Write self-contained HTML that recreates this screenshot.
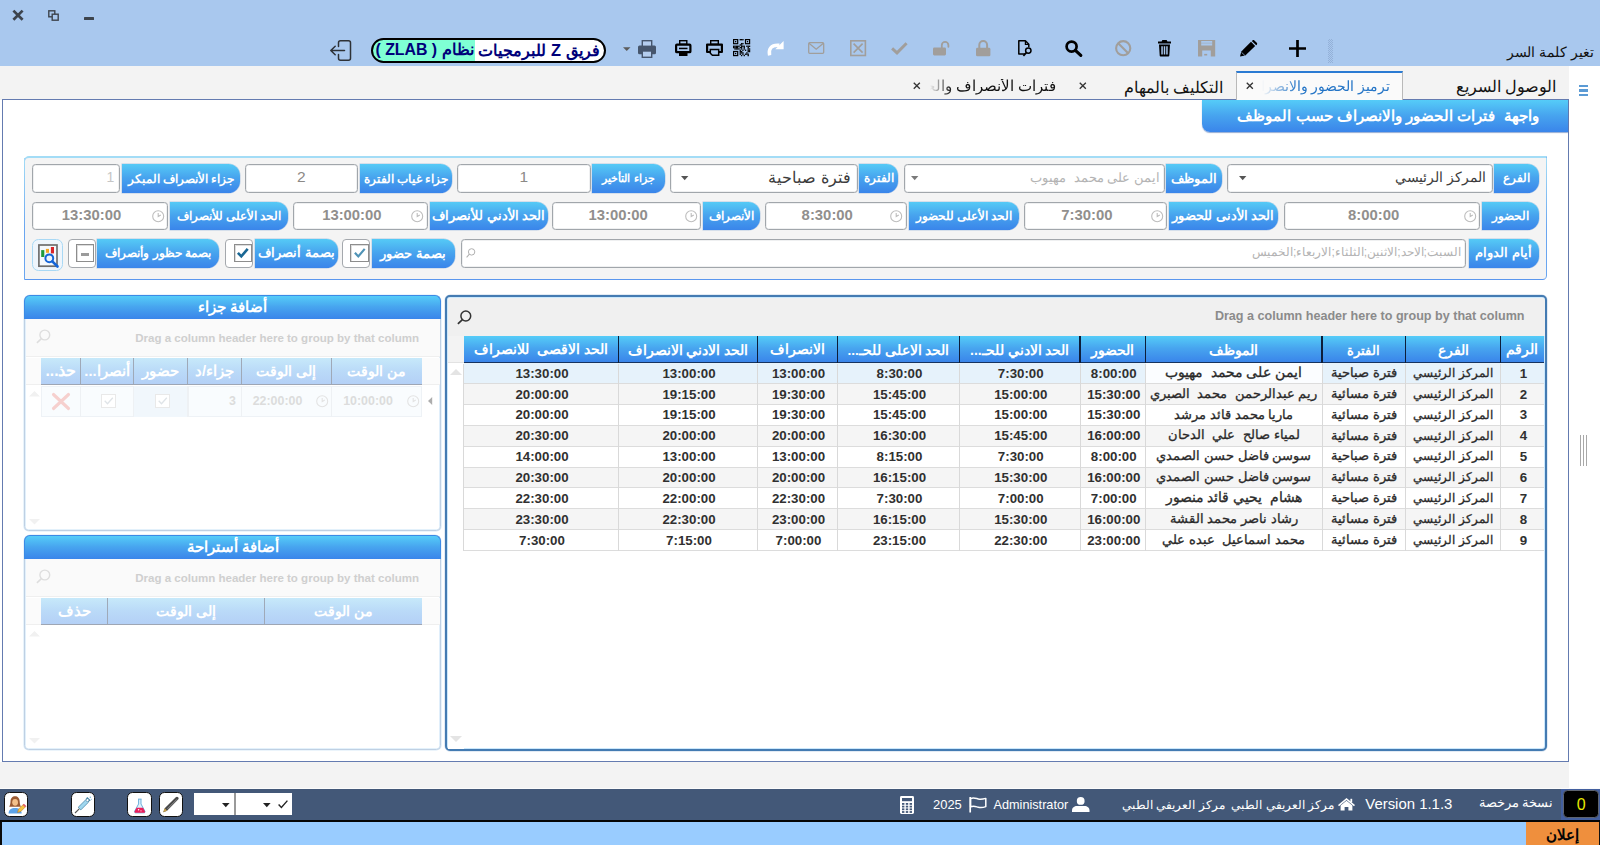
<!DOCTYPE html><html lang="ar"><head><meta charset="utf-8"><title>ZLAB</title><style>
*{box-sizing:border-box;margin:0;padding:0}
html,body{width:1600px;height:845px;overflow:hidden;background:#fff}
body{font-family:"Liberation Sans",sans-serif;position:relative;color:#222}
.a{position:absolute}
.t{position:absolute;white-space:nowrap;line-height:1}
.rtl{direction:rtl}
svg{position:absolute;overflow:visible}
#topbar{left:0;top:0;width:1600px;height:66px;background:#a9c8ee}
#tabstrip{left:0;top:66px;width:1569px;height:34px;background:#f3f3f3}
#panel{left:2px;top:98.700px;width:1567px;height:663.300px;background:#fff;border:1.900px solid #647bb0}
#gapbar{left:0;top:762px;width:1569px;height:27px;background:#f3f3f3}
#status{left:0;top:788.600px;width:1600px;height:32px;background:#435878;box-shadow:0 -1px 0 #fbfbfb}
#blackline{left:0;top:819.700px;width:1600px;height:2.300px;background:#050505}
#adbar{left:2px;top:822px;width:1597px;height:23px;background:#99ccff}
.lbl{position:absolute;height:28.500px;border-radius:0 11.500px 11.500px 0;background:linear-gradient(#55caf6,#47a3ee 48%,#3a85ea);color:#fff;font-weight:bold;text-align:center;line-height:29.500px;white-space:nowrap;direction:rtl;overflow:hidden;box-shadow:0 0 0 .5px rgba(120,160,210,.5)}
.inp{position:absolute;height:28.600px;background:#fff;border:1.800px solid #a1a6ab;border-radius:3.500px;box-shadow:inset 0 0 0 .5px #dfe1e3}
.inp .v{position:absolute;left:0;right:0;top:0;bottom:0;text-align:center;line-height:24.200px;color:#918f8d;white-space:nowrap}
.hdr{background:linear-gradient(#55ccf8,#47a4ef 48%,#3a85ea)}
</style></head><body>
<div class="a" id="topbar"></div>
<svg style="left:12px;top:9px" width="12" height="12" viewBox="0 0 12 12" ><path d="M1.400 1.600 L10.600 10.800 M10.600 1.600 L1.400 10.800" stroke="#3d444d" stroke-width="2.700" fill="none"/></svg>
<svg style="left:48px;top:10px" width="11" height="11" viewBox="0 0 11 11" ><rect x=".800" y=".800" width="6" height="6" fill="none" stroke="#3d444d" stroke-width="1.400"/><rect x="4.200" y="4.200" width="6" height="6" fill="#a9c8ee" stroke="#3d444d" stroke-width="1.400"/></svg>
<div class="a" style="left:84px;top:16.500px;width:9.500px;height:3.400px;background:#3d444d;border-radius:.5px"></div>
<svg style="left:329px;top:39px" width="23" height="23" viewBox="0 0 23 23" fill="none" stroke="#2e3237" stroke-width="1.500" stroke-linecap="round" stroke-linejoin="round"><path d="M9.500 7.500V3.800a2 2 0 0 1 2-2h8a2 2 0 0 1 2 2v15.400a2 2 0 0 1-2 2h-8a2 2 0 0 1-2-2V15.500"/><path d="M15.500 11.500H2.200M6.200 7.200L1.800 11.500l4.400 4.300"/></svg>
<div class="a" style="left:371px;top:38px;width:235px;height:25px;border:2px solid #000;border-radius:13px;background:linear-gradient(90deg,#7fffd4 0,#7fffd4 102.500px,#fff 102.500px,#fff 100%)"></div>
<div class="t rtl" style="left:477px;top:41.8px;width:124px;text-align:center;font-size:16.37px;font-weight:bold;color:#00007a;">فريق Z للبرمجيات</div>
<div class="t rtl" style="left:375px;top:41.8px;width:99px;text-align:center;font-size:15.88px;font-weight:bold;color:#00007a;">نظام ( ZLAB )</div>
<svg style="left:622.5px;top:46.5px" width="7.5" height="4" viewBox="0 0 8 4" ><path d="M0 0h8L4 4z" fill="#5c5c5c"/></svg>
<svg style="left:637.8px;top:39.5px" width="18" height="18" viewBox="0 0 18 18" ><rect x="0" y="5.600" width="18" height="8.600" rx="1.500" fill="#46566d"/>
<rect x="4.300" y=".700" width="9.400" height="5.600" fill="#b4cdee" stroke="#46566d" stroke-width="1.400"/>
<rect x="4.300" y="11" width="9.400" height="6.300" fill="#b4cdee" stroke="#46566d" stroke-width="1.400"/></svg>
<svg style="left:674.5px;top:40px" width="16.5" height="16" viewBox="0 0 16.500 16" ><rect x="4.700" y=".700" width="7.100" height="3.600" fill="#a9c8ee" stroke="#000" stroke-width="1.400"/>
<rect x="1.100" y="4.600" width="14.300" height="7.600" rx=".800" fill="#a9c8ee" stroke="#000" stroke-width="2.200"/>
<rect x="4" y="7.700" width="8.500" height="1.500" fill="#000"/>
<rect x="4" y="12.500" width="8.500" height="3.500" fill="#000"/></svg>
<svg style="left:706px;top:40px" width="17" height="16" viewBox="0 0 17 16" ><rect x="4.700" y=".700" width="7.600" height="3.600" fill="none" stroke="#000" stroke-width="1.400"/>
<path d="M4.300 12H1.100V4.600h14.800V12h-3.200" fill="none" stroke="#000" stroke-width="2.200" stroke-linejoin="round"/>
<path d="M4.300 9.400h8.400v5.800H6.400L4.300 13.200z" fill="none" stroke="#000" stroke-width="1.500"/></svg>
<svg style="left:733.4px;top:39.4px" width="17.2" height="17.2" viewBox="0 0 17.200 17.200" ><rect x="0.00" y="6.62" width="1.35" height="1.35" fill="#000"/><rect x="0.00" y="7.94" width="1.35" height="1.35" fill="#000"/><rect x="1.32" y="6.62" width="1.35" height="1.35" fill="#000"/><rect x="1.32" y="7.94" width="1.35" height="1.35" fill="#000"/><rect x="1.32" y="9.26" width="1.35" height="1.35" fill="#000"/><rect x="2.65" y="6.62" width="1.35" height="1.35" fill="#000"/><rect x="2.65" y="7.94" width="1.35" height="1.35" fill="#000"/><rect x="2.65" y="9.26" width="1.35" height="1.35" fill="#000"/><rect x="3.97" y="6.62" width="1.35" height="1.35" fill="#000"/><rect x="3.97" y="7.94" width="1.35" height="1.35" fill="#000"/><rect x="3.97" y="9.26" width="1.35" height="1.35" fill="#000"/><rect x="5.29" y="6.62" width="1.35" height="1.35" fill="#000"/><rect x="5.29" y="9.26" width="1.35" height="1.35" fill="#000"/><rect x="6.62" y="0.00" width="1.35" height="1.35" fill="#000"/><rect x="6.62" y="5.29" width="1.35" height="1.35" fill="#000"/><rect x="6.62" y="7.94" width="1.35" height="1.35" fill="#000"/><rect x="6.62" y="10.58" width="1.35" height="1.35" fill="#000"/><rect x="6.62" y="11.91" width="1.35" height="1.35" fill="#000"/><rect x="6.62" y="13.23" width="1.35" height="1.35" fill="#000"/><rect x="6.62" y="14.55" width="1.35" height="1.35" fill="#000"/><rect x="7.94" y="0.00" width="1.35" height="1.35" fill="#000"/><rect x="7.94" y="3.97" width="1.35" height="1.35" fill="#000"/><rect x="7.94" y="5.29" width="1.35" height="1.35" fill="#000"/><rect x="7.94" y="6.62" width="1.35" height="1.35" fill="#000"/><rect x="7.94" y="7.94" width="1.35" height="1.35" fill="#000"/><rect x="7.94" y="9.26" width="1.35" height="1.35" fill="#000"/><rect x="7.94" y="11.91" width="1.35" height="1.35" fill="#000"/><rect x="7.94" y="13.23" width="1.35" height="1.35" fill="#000"/><rect x="7.94" y="15.88" width="1.35" height="1.35" fill="#000"/><rect x="9.26" y="0.00" width="1.35" height="1.35" fill="#000"/><rect x="9.26" y="3.97" width="1.35" height="1.35" fill="#000"/><rect x="9.26" y="6.62" width="1.35" height="1.35" fill="#000"/><rect x="9.26" y="10.58" width="1.35" height="1.35" fill="#000"/><rect x="9.26" y="13.23" width="1.35" height="1.35" fill="#000"/><rect x="9.26" y="14.55" width="1.35" height="1.35" fill="#000"/><rect x="10.58" y="6.62" width="1.35" height="1.35" fill="#000"/><rect x="10.58" y="7.94" width="1.35" height="1.35" fill="#000"/><rect x="10.58" y="9.26" width="1.35" height="1.35" fill="#000"/><rect x="10.58" y="15.88" width="1.35" height="1.35" fill="#000"/><rect x="11.91" y="10.58" width="1.35" height="1.35" fill="#000"/><rect x="11.91" y="14.55" width="1.35" height="1.35" fill="#000"/><rect x="13.23" y="6.62" width="1.35" height="1.35" fill="#000"/><rect x="13.23" y="13.23" width="1.35" height="1.35" fill="#000"/><rect x="13.23" y="14.55" width="1.35" height="1.35" fill="#000"/><rect x="14.55" y="6.62" width="1.35" height="1.35" fill="#000"/><rect x="14.55" y="7.94" width="1.35" height="1.35" fill="#000"/><rect x="14.55" y="9.26" width="1.35" height="1.35" fill="#000"/><rect x="14.55" y="10.58" width="1.35" height="1.35" fill="#000"/><rect x="14.55" y="11.91" width="1.35" height="1.35" fill="#000"/><rect x="14.55" y="14.55" width="1.35" height="1.35" fill="#000"/><rect x="14.55" y="15.88" width="1.35" height="1.35" fill="#000"/><rect x="15.88" y="6.62" width="1.35" height="1.35" fill="#000"/><rect x="15.88" y="9.26" width="1.35" height="1.35" fill="#000"/><rect x="15.88" y="10.58" width="1.35" height="1.35" fill="#000"/><rect x="15.88" y="11.91" width="1.35" height="1.35" fill="#000"/><rect x="0.00" y="0.00" width="5.29" height="5.29" fill="#000"/><rect x="1.19" y="1.19" width="2.91" height="2.91" fill="#a9c8ee"/><rect x="1.98" y="1.98" width="1.32" height="1.32" fill="#000"/><rect x="11.91" y="0.00" width="5.29" height="5.29" fill="#000"/><rect x="13.10" y="1.19" width="2.91" height="2.91" fill="#a9c8ee"/><rect x="13.89" y="1.98" width="1.32" height="1.32" fill="#000"/><rect x="0.00" y="11.91" width="5.29" height="5.29" fill="#000"/><rect x="1.19" y="13.10" width="2.91" height="2.91" fill="#a9c8ee"/><rect x="1.98" y="13.89" width="1.32" height="1.32" fill="#000"/></svg>
<svg style="left:766.5px;top:41px" width="17" height="14.6" viewBox="0 0 17 14.600" ><path d="M2.600 14.400C1.300 8.400 3.800 3.400 12.400 4.300" fill="none" stroke="#fff" stroke-width="3.400"/><path d="M16.600 0v8.300H8.300z" fill="#fff"/></svg>
<svg style="left:808px;top:42px" width="16.4" height="12" viewBox="0 0 16.400 12" ><rect x=".700" y=".700" width="15" height="10.600" rx="1" fill="none" stroke="#a19e9b" stroke-width="1.300"/><path d="M1 1.300l7.200 5.900 7.200-5.900" fill="none" stroke="#a19e9b" stroke-width="1.300"/></svg>
<svg style="left:850px;top:40px" width="16.2" height="16.3" viewBox="0 0 16.200 16.300" ><rect x=".800" y=".800" width="14.600" height="14.700" fill="none" stroke="#a19e9b" stroke-width="1.600"/><path d="M3.600 3.600l9 9M12.600 3.600l-9 9" stroke="#a19e9b" stroke-width="1.600" fill="none"/></svg>
<svg style="left:891.3px;top:42px" width="16.6" height="12.2" viewBox="0 0 16.600 12.200" ><path d="M1.100 6.400l4.900 4.500L15.600 1.200" fill="none" stroke="#a19e9b" stroke-width="2.900"/></svg>
<svg style="left:933px;top:41.2px" width="16.6" height="14.4" viewBox="0 0 16.600 14.400" ><rect x="0" y="6.600" width="13" height="7.800" rx="1.300" fill="#a19e9b"/><path d="M8.800 6.800V4.200a3.300 3.300 0 0 1 6.600 0v1.600" fill="none" stroke="#a19e9b" stroke-width="1.800" stroke-linecap="round"/></svg>
<svg style="left:976px;top:40px" width="14.4" height="16.3" viewBox="0 0 14.400 16.300" ><rect x="0" y="7.800" width="14.400" height="8.500" rx="1.400" fill="#a19e9b"/><path d="M3.300 8V5a3.900 3.900 0 0 1 7.800 0v3" fill="none" stroke="#a19e9b" stroke-width="2"/></svg>
<svg style="left:1017.8px;top:40.3px" width="14" height="16.4" viewBox="0 0 14 16.400" ><path d="M7 14H.800V.800h6.600l3.400 3.400v3" fill="none" stroke="#000" stroke-width="1.500" stroke-linejoin="round"/><path d="M7.400 1v3.400h3.400" fill="none" stroke="#000" stroke-width="1.200"/><circle cx="10.300" cy="10.600" r="2.700" fill="none" stroke="#000" stroke-width="1.500"/><path d="M8.400 12.700l-3 3.200" stroke="#000" stroke-width="1.700"/></svg>
<svg style="left:1065.4px;top:40.3px" width="17" height="16.4" viewBox="0 0 17 16.400" ><circle cx="6.600" cy="6.600" r="5" fill="none" stroke="#000" stroke-width="2.700"/><path d="M10.400 10.400l5.400 5" stroke="#000" stroke-width="3.200" stroke-linecap="round"/></svg>
<svg style="left:1114.8px;top:40.2px" width="16.4" height="16.4" viewBox="0 0 16.400 16.400" ><circle cx="8.200" cy="8.200" r="7.100" fill="none" stroke="#a19e9b" stroke-width="2.100"/><path d="M3.200 3.200l10 10" stroke="#a19e9b" stroke-width="2.100"/></svg>
<svg style="left:1158.4px;top:39.8px" width="13" height="16.6" viewBox="0 0 13 16.600" ><path d="M4.400 0h4.200l.800 1.600H13v1.800H0V1.600h3.600z" fill="#000"/><path d="M1 4.400h11l-.700 11c0 .700-.600 1.200-1.200 1.200H2.900c-.700 0-1.200-.500-1.200-1.200z M3.300 6.300v8.200h1.500v-8.200z M5.750 6.300v8.200h1.500v-8.200z M8.200 6.300v8.200h1.500v-8.200z" fill="#000" fill-rule="evenodd"/></svg>
<svg style="left:1197.8px;top:40px" width="17.2" height="16.4" viewBox="0 0 17.200 16.400" ><path d="M0 0h17.200v16.400H0z M3.200 1v4.600h11V1z M4.200 10.500v5.900h8.600v-5.900z" fill="#a19e9b" fill-rule="evenodd"/><rect x="3.200" y="2.600" width="11" height="1.200" fill="#a19e9b" opacity=".35"/><rect x="6.200" y="13.900" width="3" height="1.600" fill="#a19e9b"/></svg>
<svg style="left:1239.8px;top:40px" width="17.4" height="16.6" viewBox="0 0 17.400 16.600" ><path d="M0 16.600l1.300-5.200L11 1.700l4.200 4.200L5.300 15.600z" fill="#000"/><path d="M1.600 12.400l3.400 3.200" stroke="#a9c8ee" stroke-width=".700"/><path d="M11.800 1l.700-.600c.600-.500 1.400-.500 1.900 0l2.400 2.400c.500.500.500 1.300 0 1.900l-.600.600z" fill="#000"/></svg>
<svg style="left:1289px;top:40px" width="17" height="17" viewBox="0 0 17 17" ><path d="M8.500 0v17M0 8.500h17" stroke="#000" stroke-width="2.700"/></svg>
<div class="a" style="left:1328px;top:38.500px;width:5px;height:24.500px;background-image:linear-gradient(45deg,rgba(120,145,185,.42) 25%,transparent 25%,transparent 75%,rgba(120,145,185,.42) 75%),linear-gradient(45deg,rgba(120,145,185,.42) 25%,transparent 25%,transparent 75%,rgba(120,145,185,.42) 75%);background-size:2px 2px;background-position:0 0,1px 1px"></div>
<div class="t rtl" style="left:1400px;top:44.5px;width:194px;text-align:right;font-size:14.21px;color:#111;">تغير كلمة السر</div>
<div class="a" id="tabstrip"></div>
<div class="a" id="gapbar"></div>
<div class="a" id="panel"></div>
<div class="a" style="left:1236px;top:71px;width:167px;height:29px;background:#fafafa;border:1px solid #b9b9b9;border-top:2px solid #2b7bd3;border-bottom:none"></div>
<div class="t rtl" style="left:1262px;top:78.5px;width:128.500px;text-align:right;font-size:14.38px;color:#2374c6;overflow:hidden;height:22px;-webkit-mask-image:linear-gradient(90deg,transparent 0,#000 36px);mask-image:linear-gradient(90deg,transparent 0,#000 36px)">ترميز الحضور والانصراف</div>
<svg style="left:1246px;top:81.6px" width="7.6" height="7.6" viewBox="0 0 8 8" ><path d="M.800.800l6.400 6.400M7.200.800L.800 7.200" stroke="#333" stroke-width="1.400"/></svg>
<div class="t rtl" style="left:1440px;top:78.5px;width:116.5px;text-align:right;font-size:15.93px;color:#111;">الوصول السريع</div>
<div class="t rtl" style="left:1100px;top:78.5px;width:123px;text-align:right;font-size:16.14px;color:#111;">التكليف بالمهام</div>
<svg style="left:1079px;top:81.6px" width="7.6" height="7.6" viewBox="0 0 8 8" ><path d="M.800.800l6.400 6.400M7.200.800L.800 7.200" stroke="#333" stroke-width="1.400"/></svg>
<div class="t rtl" style="left:930px;top:78.5px;width:126px;text-align:right;font-size:14.79px;color:#111;overflow:hidden;height:22px;-webkit-mask-image:linear-gradient(90deg,transparent 0,#000 22px);mask-image:linear-gradient(90deg,transparent 0,#000 22px)">فترات الأنصراف والحضور</div>
<svg style="left:912.6px;top:81.6px" width="7.6" height="7.6" viewBox="0 0 8 8" ><path d="M.800.800l6.400 6.400M7.200.800L.800 7.200" stroke="#333" stroke-width="1.400"/></svg>
<div class="a" style="left:1578.500px;top:84.500px;width:9.500px;height:11.200px;background:linear-gradient(#5b9bd5 0,#5b9bd5 2.400px,transparent 2.400px,transparent 4.400px,#5b9bd5 4.400px,#5b9bd5 6.800px,transparent 6.800px,transparent 8.800px,#5b9bd5 8.800px,#5b9bd5 11.200px)"></div>
<div class="a hdr" style="left:1202px;top:99.500px;width:366px;height:32px;border-radius:0 0 0 8px;box-shadow:0 1px 1px rgba(40,90,170,.5)"></div>
<div class="t rtl" style="left:1210px;top:107.8px;width:329px;text-align:right;font-size:15.4px;font-weight:bold;color:#fff;">واجهة&nbsp; فترات الحضور والانصراف حسب الموظف</div>
<div class="a" style="left:23.800px;top:156px;width:1523.200px;height:124.200px;background:#f4f4f4;border:1.300px solid #6aa6f0;border-top:2px solid #a3dcf6;border-bottom-color:#5b97ee;border-image:none;border-radius:5px 0 4.500px 0"></div>
<div class="a" style="left:23.800px;top:158px;width:1.300px;height:70px;background:linear-gradient(#a3dcf6,#6aa6f0)"></div><div class="a" style="left:1545.700px;top:158px;width:1.300px;height:70px;background:linear-gradient(#a3dcf6,#6aa6f0)"></div>
<div class="lbl" style="left:1494px;top:164.3px;width:44.7px;font-size:12.2px">الفرع</div>
<div class="inp" style="left:1226.8px;top:164.3px;width:265.8px"><div class="v rtl" style="text-align:right;padding-right:5.5px;color:#3c3c3c;font-size:14.04px;line-height:25.500px">المركز الرئيسي</div></div>
<svg style="left:1238.7px;top:176.3px" width="7.4" height="4.2" viewBox="0 0 8 4.400" ><path d="M0 0h8L4 4.400z" fill="#555"/></svg>
<div class="lbl" style="left:1166.2px;top:164.3px;width:55.8px;font-size:13.06px">الموظف</div>
<div class="inp" style="left:904.3px;top:164.3px;width:260.3px"><div class="v rtl" style="text-align:right;padding-right:3.5px;color:#b4b4b4;font-size:13.16px;line-height:25.500px">ايمن على محمد&nbsp; مهيوب</div></div>
<svg style="left:911px;top:176.3px" width="7.4" height="4.2" viewBox="0 0 8 4.400" ><path d="M0 0h8L4 4.400z" fill="#7a7a7a"/></svg>
<div class="lbl" style="left:859px;top:164.3px;width:39.2px;font-size:11.86px">الفترة</div>
<div class="inp" style="left:670px;top:164.3px;width:187.7px"><div class="v rtl" style="text-align:right;padding-right:6px;color:#3c3c3c;font-size:15.6px;line-height:25.500px">فترة صباحية</div></div>
<svg style="left:681.3px;top:176.3px" width="7.4" height="4.2" viewBox="0 0 8 4.400" ><path d="M0 0h8L4 4.400z" fill="#555"/></svg>
<div class="lbl" style="left:592.2px;top:164.3px;width:72.7px;font-size:11.25px">جزاء التأخير</div>
<div class="inp" style="left:457.2px;top:164.3px;width:133.4px"><div class="v" style="text-align:center;color:#8c8986;font-size:15.5px;">1</div></div>
<div class="lbl" style="left:359.8px;top:164.3px;width:92.2px;font-size:11.74px">جزاء غياب الفترة</div>
<div class="inp" style="left:244.6px;top:164.3px;width:113.4px"><div class="v" style="text-align:center;color:#8c8986;font-size:15.5px;">2</div></div>
<div class="lbl" style="left:121.9px;top:164.3px;width:118.1px;font-size:11.64px">جزاء الأنصراف المبكر</div>
<div class="inp" style="left:32.3px;top:164.3px;width:88.1px"><div class="v" style="text-align:right;color:#c6c6c6;font-size:14px;padding-right:5px;">1</div></div>
<div class="lbl" style="left:1481.8px;top:201.9px;width:56.9px;font-size:12.46px">الحضور</div>
<div class="inp" style="left:1284.4px;top:201.9px;width:195.5px"><div class="v" style="font-weight:bold;right:17px;font-size:14.88px">8:00:00</div></div>
<svg style="left:1463.6000000000001px;top:209.9px" width="12.4" height="12.4" viewBox="0 0 12.400 12.400" ><circle cx="6.200" cy="6.200" r="5.500" fill="none" stroke="#bdbdbd" stroke-width="1.100"/><path d="M6.200 3v3.600l2.600-1.500" fill="none" stroke="#bdbdbd" stroke-width="1.100"/></svg>
<div class="lbl" style="left:1168.5px;top:201.9px;width:109.9px;font-size:12.59px">الحد الأدنى للحضور</div>
<div class="inp" style="left:1024px;top:201.9px;width:142.9px"><div class="v" style="font-weight:bold;right:17px;font-size:14.92px">7:30:00</div></div>
<svg style="left:1150.6000000000001px;top:209.9px" width="12.4" height="12.4" viewBox="0 0 12.400 12.400" ><circle cx="6.200" cy="6.200" r="5.500" fill="none" stroke="#bdbdbd" stroke-width="1.100"/><path d="M6.200 3v3.600l2.600-1.500" fill="none" stroke="#bdbdbd" stroke-width="1.100"/></svg>
<div class="lbl" style="left:908.6px;top:201.9px;width:110.9px;font-size:12.47px">الحد الأعلى للحضور</div>
<div class="inp" style="left:765px;top:201.9px;width:141.5px"><div class="v" style="font-weight:bold;right:17px;font-size:14.88px">8:30:00</div></div>
<svg style="left:890.2px;top:209.9px" width="12.4" height="12.4" viewBox="0 0 12.400 12.400" ><circle cx="6.200" cy="6.200" r="5.500" fill="none" stroke="#bdbdbd" stroke-width="1.100"/><path d="M6.200 3v3.600l2.600-1.500" fill="none" stroke="#bdbdbd" stroke-width="1.100"/></svg>
<div class="lbl" style="left:702.5px;top:201.9px;width:57.5px;font-size:12.13px">الأنصراف</div>
<div class="inp" style="left:552.4px;top:201.9px;width:148.5px"><div class="v" style="font-weight:bold;right:17px;font-size:14.85px">13:00:00</div></div>
<svg style="left:684.6px;top:209.9px" width="12.4" height="12.4" viewBox="0 0 12.400 12.400" ><circle cx="6.200" cy="6.200" r="5.500" fill="none" stroke="#bdbdbd" stroke-width="1.100"/><path d="M6.200 3v3.600l2.600-1.500" fill="none" stroke="#bdbdbd" stroke-width="1.100"/></svg>
<div class="lbl" style="left:429.5px;top:201.9px;width:118.2px;font-size:12.5px">الحد الأدني للأنصراف</div>
<div class="inp" style="left:293px;top:201.9px;width:134.7px"><div class="v" style="font-weight:bold;right:17px;font-size:14.85px">13:00:00</div></div>
<svg style="left:411.4px;top:209.9px" width="12.4" height="12.4" viewBox="0 0 12.400 12.400" ><circle cx="6.200" cy="6.200" r="5.500" fill="none" stroke="#bdbdbd" stroke-width="1.100"/><path d="M6.200 3v3.600l2.600-1.500" fill="none" stroke="#bdbdbd" stroke-width="1.100"/></svg>
<div class="lbl" style="left:169.7px;top:201.9px;width:118.5px;font-size:12.36px">الحد الأعلى للأنصراف</div>
<div class="inp" style="left:32.3px;top:201.9px;width:135.5px"><div class="v" style="font-weight:bold;right:17px;font-size:14.85px">13:30:00</div></div>
<svg style="left:151.5px;top:209.9px" width="12.4" height="12.4" viewBox="0 0 12.400 12.400" ><circle cx="6.200" cy="6.200" r="5.500" fill="none" stroke="#bdbdbd" stroke-width="1.100"/><path d="M6.200 3v3.600l2.600-1.500" fill="none" stroke="#bdbdbd" stroke-width="1.100"/></svg>
<div class="lbl" style="left:1468.6px;top:239.3px;width:70.1px;font-size:12.55px">أيام الدوام</div>
<div class="inp" style="left:460.600px;top:239.3px;width:1005.900px"><div class="v rtl" style="text-align:right;padding-right:4.500px;color:#b3b3b3;font-size:12.16px;line-height:25.500px">السبت;الاحد;الاثنين;الثلثاء;الاربعاء;الخميس</div></div>
<svg style="left:466px;top:248.3px" width="9.5" height="10" viewBox="0 0 9.500 10" ><circle cx="5.600" cy="3.900" r="3.200" fill="none" stroke="#b0b0b0" stroke-width="1"/><path d="M3.400 6.200L.600 9.400" stroke="#b0b0b0" stroke-width="1.100"/></svg>
<div class="lbl" style="left:371.5px;top:239.3px;width:83.5px;font-size:12.83px">بصمة حضور</div>
<div class="a" style="left:342.2px;top:239.3px;width:27.8px;height:28.500px;background:#fff;border:1.800px solid #a4a8ad;border-radius:4px"></div>
<div class="a" style="left:350.3px;top:243.8px;width:18.500px;height:18.500px;background:#fff;border:1.300px solid #8d8d8d;box-shadow:inset 1px 1px 0 #ddd"></div>
<svg style="left:353.90000000000003px;top:247.8px" width="11.5" height="10" viewBox="0 0 11.500 10" ><path d="M.900 4.800l3.400 3.600L10.700.900" fill="none" stroke="#4f93b6" stroke-width="2.200"/></svg>
<div class="lbl" style="left:255px;top:239.3px;width:82.7px;font-size:12.57px">بصمة أنصراف</div>
<div class="a" style="left:225.4px;top:239.3px;width:27.9px;height:28.500px;background:#fff;border:1.800px solid #a4a8ad;border-radius:4px"></div>
<div class="a" style="left:233.60000000000002px;top:243.8px;width:18.500px;height:18.500px;background:#fff;border:1.300px solid #8d8d8d;box-shadow:inset 1px 1px 0 #ddd"></div>
<svg style="left:237.20000000000002px;top:247.8px" width="11.5" height="10" viewBox="0 0 11.500 10" ><path d="M.900 4.800l3.400 3.600L10.700.900" fill="none" stroke="#1a6794" stroke-width="2.600"/></svg>
<div class="lbl" style="left:97px;top:239.3px;width:122.4px;font-size:12.45px">بصمة حظور وأنصراف</div>
<div class="a" style="left:67.9px;top:239.3px;width:27.7px;height:28.500px;background:#fff;border:1.800px solid #a4a8ad;border-radius:4px"></div>
<div class="a" style="left:75.89999999999999px;top:243.8px;width:18.500px;height:18.500px;background:#fff;border:1.300px solid #8d8d8d;box-shadow:inset 1px 1px 0 #ddd"></div>
<div class="a" style="left:80.89999999999999px;top:252.5px;width:8.500px;height:3.100px;background:#9b9b9b"></div>
<div class="a" style="left:31.800px;top:239.3px;width:31.600px;height:31.400px;background:#eef5fc;border:1.400px solid #a8d8f4;border-radius:6.500px"></div>
<svg style="left:37.5px;top:244px" width="20.5" height="23.5" viewBox="0 0 20.500 23.500" ><rect x=".900" y="1" width="18.100" height="21.200" fill="#f4f8fd" stroke="#6e6e6e" stroke-width="1.700"/>
<rect x="3.200" y="6.100" width="3.100" height="6.900" fill="#1e9a3c"/><rect x="7.900" y="4.900" width="3.100" height="3.900" fill="#f5a623"/><rect x="12.900" y="3" width="3.100" height="6.400" fill="#d8232a"/>
<circle cx="11.300" cy="14.300" r="3.900" fill="#eef4fc" stroke="#1565d8" stroke-width="2"/><path d="M14.300 17.300l5.200 5.200" stroke="#1565d8" stroke-width="2.600" stroke-linecap="round"/></svg>
<div class="a" style="left:445px;top:295px;width:1101.500px;height:455.500px;background:#fff;border:2px solid #447bb2;border-radius:5px;box-shadow:0 0 0 .5px rgba(68,123,178,.3),inset 0 0 0 1px #cbe8fc"></div>
<div class="a" style="left:447.500px;top:297.500px;width:1097px;height:38.500px;background:#f0f0f0;border-radius:3px 3px 0 0"></div>
<div class="t" style="left:1100px;top:310px;width:424.5px;text-align:right;font-size:12.58px;font-weight:bold;color:#8b8b8b;">Drag a column header here to group by that column</div>
<svg style="left:457px;top:309.5px" width="15" height="14.5" viewBox="0 0 15 14.500" ><circle cx="8.800" cy="6" r="4.900" fill="none" stroke="#333" stroke-width="1.500"/><path d="M5.400 9.600L.900 13.800" stroke="#333" stroke-width="1.700"/></svg>
<div class="a" style="left:447.500px;top:336px;width:16px;height:412.500px;background:#fff"></div>
<div class="a" style="left:447.500px;top:336px;width:16px;height:27px;background:#f3f3f3;border-bottom:1px solid #e2e2e2"></div>
<svg style="left:449.5px;top:369px" width="12" height="6" viewBox="0 0 12 6" ><path d="M0 6L6 0l6 6z" fill="#e4e4e4"/></svg>
<svg style="left:449.5px;top:736px" width="12" height="6" viewBox="0 0 12 6" ><path d="M0 0h12L6 6z" fill="#e4e4e4"/></svg>
<div class="a hdr" style="left:463.5px;top:336px;width:1080.8px;height:27px;border-bottom:1.500px solid #16335f"></div>
<div class="t rtl" style="left:1500.5px;top:343.4px;width:43.8px;text-align:center;font-size:13.81px;font-weight:bold;color:#fff;">الرقم</div>
<div class="a" style="left:1499.9px;top:336px;width:1.200px;height:26.500px;background:#0d1e3a"></div>
<div class="t rtl" style="left:1405.5px;top:343.5px;width:95.0px;text-align:center;font-size:13.71px;font-weight:bold;color:#fff;">الفرع</div>
<div class="a" style="left:1404.9px;top:336px;width:1.200px;height:26.500px;background:#0d1e3a"></div>
<div class="t rtl" style="left:1322px;top:343.7px;width:83.5px;text-align:center;font-size:13.45px;font-weight:bold;color:#fff;">الفترة</div>
<div class="a" style="left:1321.4px;top:336px;width:1.200px;height:26.500px;background:#0d1e3a"></div>
<div class="t rtl" style="left:1145.5px;top:342.9px;width:176.5px;text-align:center;font-size:14.45px;font-weight:bold;color:#fff;">الموظف</div>
<div class="a" style="left:1144.9px;top:336px;width:1.200px;height:26.500px;background:#0d1e3a"></div>
<div class="t rtl" style="left:1080px;top:343.1px;width:65.5px;text-align:center;font-size:14.21px;font-weight:bold;color:#fff;">الحضور</div>
<div class="a" style="left:1079.4px;top:336px;width:1.200px;height:26.500px;background:#0d1e3a"></div>
<div class="t rtl" style="left:959.5px;top:343.2px;width:120.5px;text-align:center;font-size:14.03px;font-weight:bold;color:#fff;">الحد الادني للحـ...</div>
<div class="a" style="left:958.9px;top:336px;width:1.200px;height:26.500px;background:#0d1e3a"></div>
<div class="t rtl" style="left:837.5px;top:343.5px;width:122.0px;text-align:center;font-size:13.68px;font-weight:bold;color:#fff;">الحد الاعلى للحـ...</div>
<div class="a" style="left:836.9px;top:336px;width:1.200px;height:26.500px;background:#0d1e3a"></div>
<div class="t rtl" style="left:757.5px;top:343.4px;width:80.0px;text-align:center;font-size:13.87px;font-weight:bold;color:#fff;">الانصراف</div>
<div class="a" style="left:756.9px;top:336px;width:1.200px;height:26.500px;background:#0d1e3a"></div>
<div class="t rtl" style="left:618.5px;top:343.2px;width:139.0px;text-align:center;font-size:14.07px;font-weight:bold;color:#fff;">الحد الادني الانصراف</div>
<div class="a" style="left:617.9px;top:336px;width:1.200px;height:26.500px;background:#0d1e3a"></div>
<div class="t rtl" style="left:463.5px;top:343.4px;width:155.0px;text-align:center;font-size:13.77px;font-weight:bold;color:#fff;">الحد الاقصى&nbsp; للانصراف</div>
<div class="a" style="left:463.5px;top:363.3px;width:1080.8px;height:20.85px;background:#e6f2fb;border-bottom:1px solid #dcdcdc"></div>
<div class="t" style="left:1500.5px;top:366.7px;width:43.8px;text-align:center;font-size:13.3px;font-weight:bold;color:#303030;padding-left:2px;">1</div>
<div class="t rtl" style="left:1405.5px;top:367.0px;width:95.0px;text-align:center;font-size:12.06px;color:#2a2a2a;-webkit-text-stroke:.3px #2a2a2a">المركز الرئيسي</div>
<div class="t rtl" style="left:1322px;top:365.9px;width:83.5px;text-align:center;font-size:13.36px;color:#2a2a2a;-webkit-text-stroke:.3px #2a2a2a">فترة صباحية</div>
<div class="a" style="left:1146.0px;top:363.3px;width:175.5px;height:19.85px;background:#fbfdff"></div>
<div class="t rtl" style="left:1145.5px;top:365.8px;width:176.5px;text-align:center;font-size:13.52px;color:#2a2a2a;-webkit-text-stroke:.3px #2a2a2a">ايمن على محمد&nbsp; مهيوب</div>
<div class="t" style="left:1080px;top:366.7px;width:65.5px;text-align:center;font-size:13.3px;font-weight:bold;color:#303030;padding-left:2px;">8:00:00</div>
<div class="t" style="left:959.5px;top:366.7px;width:120.5px;text-align:center;font-size:13.3px;font-weight:bold;color:#303030;padding-left:2px;">7:30:00</div>
<div class="t" style="left:837.5px;top:366.7px;width:122.0px;text-align:center;font-size:13.3px;font-weight:bold;color:#303030;padding-left:2px;">8:30:00</div>
<div class="t" style="left:757.5px;top:366.7px;width:80.0px;text-align:center;font-size:13.3px;font-weight:bold;color:#303030;padding-left:2px;">13:00:00</div>
<div class="t" style="left:618.5px;top:366.7px;width:139.0px;text-align:center;font-size:13.3px;font-weight:bold;color:#303030;padding-left:2px;">13:00:00</div>
<div class="t" style="left:463.5px;top:366.7px;width:155.0px;text-align:center;font-size:13.3px;font-weight:bold;color:#303030;padding-left:2px;">13:30:00</div>
<div class="a" style="left:463.5px;top:384.2px;width:1080.8px;height:20.85px;background:#f5f5f5;border-bottom:1px solid #dcdcdc"></div>
<div class="t" style="left:1500.5px;top:387.6px;width:43.8px;text-align:center;font-size:13.3px;font-weight:bold;color:#303030;padding-left:2px;">2</div>
<div class="t rtl" style="left:1405.5px;top:387.8px;width:95.0px;text-align:center;font-size:12.06px;color:#2a2a2a;-webkit-text-stroke:.3px #2a2a2a">المركز الرئيسي</div>
<div class="t rtl" style="left:1322px;top:386.9px;width:83.5px;text-align:center;font-size:13.23px;color:#2a2a2a;-webkit-text-stroke:.3px #2a2a2a">فترة مسائية</div>
<div class="t rtl" style="left:1145.5px;top:386.9px;width:176.5px;text-align:center;font-size:13.19px;color:#2a2a2a;-webkit-text-stroke:.3px #2a2a2a">ريم عبدالرحمن&nbsp; محمد&nbsp; الصبري</div>
<div class="t" style="left:1080px;top:387.6px;width:65.5px;text-align:center;font-size:13.3px;font-weight:bold;color:#303030;padding-left:2px;">15:30:00</div>
<div class="t" style="left:959.5px;top:387.6px;width:120.5px;text-align:center;font-size:13.3px;font-weight:bold;color:#303030;padding-left:2px;">15:00:00</div>
<div class="t" style="left:837.5px;top:387.6px;width:122.0px;text-align:center;font-size:13.3px;font-weight:bold;color:#303030;padding-left:2px;">15:45:00</div>
<div class="t" style="left:757.5px;top:387.6px;width:80.0px;text-align:center;font-size:13.3px;font-weight:bold;color:#303030;padding-left:2px;">19:30:00</div>
<div class="t" style="left:618.5px;top:387.6px;width:139.0px;text-align:center;font-size:13.3px;font-weight:bold;color:#303030;padding-left:2px;">19:15:00</div>
<div class="t" style="left:463.5px;top:387.6px;width:155.0px;text-align:center;font-size:13.3px;font-weight:bold;color:#303030;padding-left:2px;">20:00:00</div>
<div class="a" style="left:463.5px;top:405.0px;width:1080.8px;height:20.85px;background:#fff;border-bottom:1px solid #dcdcdc"></div>
<div class="t" style="left:1500.5px;top:408.4px;width:43.8px;text-align:center;font-size:13.3px;font-weight:bold;color:#303030;padding-left:2px;">3</div>
<div class="t rtl" style="left:1405.5px;top:408.7px;width:95.0px;text-align:center;font-size:12.06px;color:#2a2a2a;-webkit-text-stroke:.3px #2a2a2a">المركز الرئيسي</div>
<div class="t rtl" style="left:1322px;top:407.7px;width:83.5px;text-align:center;font-size:13.23px;color:#2a2a2a;-webkit-text-stroke:.3px #2a2a2a">فترة مسائية</div>
<div class="t rtl" style="left:1145.5px;top:407.6px;width:176.5px;text-align:center;font-size:13.32px;color:#2a2a2a;-webkit-text-stroke:.3px #2a2a2a">ماريا محمد قائد مرشد</div>
<div class="t" style="left:1080px;top:408.4px;width:65.5px;text-align:center;font-size:13.3px;font-weight:bold;color:#303030;padding-left:2px;">15:30:00</div>
<div class="t" style="left:959.5px;top:408.4px;width:120.5px;text-align:center;font-size:13.3px;font-weight:bold;color:#303030;padding-left:2px;">15:00:00</div>
<div class="t" style="left:837.5px;top:408.4px;width:122.0px;text-align:center;font-size:13.3px;font-weight:bold;color:#303030;padding-left:2px;">15:45:00</div>
<div class="t" style="left:757.5px;top:408.4px;width:80.0px;text-align:center;font-size:13.3px;font-weight:bold;color:#303030;padding-left:2px;">19:30:00</div>
<div class="t" style="left:618.5px;top:408.4px;width:139.0px;text-align:center;font-size:13.3px;font-weight:bold;color:#303030;padding-left:2px;">19:15:00</div>
<div class="t" style="left:463.5px;top:408.4px;width:155.0px;text-align:center;font-size:13.3px;font-weight:bold;color:#303030;padding-left:2px;">20:00:00</div>
<div class="a" style="left:463.5px;top:425.9px;width:1080.8px;height:20.85px;background:#f5f5f5;border-bottom:1px solid #dcdcdc"></div>
<div class="t" style="left:1500.5px;top:429.2px;width:43.8px;text-align:center;font-size:13.3px;font-weight:bold;color:#303030;padding-left:2px;">4</div>
<div class="t rtl" style="left:1405.5px;top:429.5px;width:95.0px;text-align:center;font-size:12.06px;color:#2a2a2a;-webkit-text-stroke:.3px #2a2a2a">المركز الرئيسي</div>
<div class="t rtl" style="left:1322px;top:428.6px;width:83.5px;text-align:center;font-size:13.23px;color:#2a2a2a;-webkit-text-stroke:.3px #2a2a2a">فترة مسائية</div>
<div class="t rtl" style="left:1145.5px;top:428.4px;width:176.5px;text-align:center;font-size:13.44px;color:#2a2a2a;-webkit-text-stroke:.3px #2a2a2a">لمياء صالح&nbsp; علي&nbsp; الدحان</div>
<div class="t" style="left:1080px;top:429.2px;width:65.5px;text-align:center;font-size:13.3px;font-weight:bold;color:#303030;padding-left:2px;">16:00:00</div>
<div class="t" style="left:959.5px;top:429.2px;width:120.5px;text-align:center;font-size:13.3px;font-weight:bold;color:#303030;padding-left:2px;">15:45:00</div>
<div class="t" style="left:837.5px;top:429.2px;width:122.0px;text-align:center;font-size:13.3px;font-weight:bold;color:#303030;padding-left:2px;">16:30:00</div>
<div class="t" style="left:757.5px;top:429.2px;width:80.0px;text-align:center;font-size:13.3px;font-weight:bold;color:#303030;padding-left:2px;">20:00:00</div>
<div class="t" style="left:618.5px;top:429.2px;width:139.0px;text-align:center;font-size:13.3px;font-weight:bold;color:#303030;padding-left:2px;">20:00:00</div>
<div class="t" style="left:463.5px;top:429.2px;width:155.0px;text-align:center;font-size:13.3px;font-weight:bold;color:#303030;padding-left:2px;">20:30:00</div>
<div class="a" style="left:463.5px;top:446.7px;width:1080.8px;height:20.85px;background:#fff;border-bottom:1px solid #dcdcdc"></div>
<div class="t" style="left:1500.5px;top:450.1px;width:43.8px;text-align:center;font-size:13.3px;font-weight:bold;color:#303030;padding-left:2px;">5</div>
<div class="t rtl" style="left:1405.5px;top:450.4px;width:95.0px;text-align:center;font-size:12.06px;color:#2a2a2a;-webkit-text-stroke:.3px #2a2a2a">المركز الرئيسي</div>
<div class="t rtl" style="left:1322px;top:449.3px;width:83.5px;text-align:center;font-size:13.36px;color:#2a2a2a;-webkit-text-stroke:.3px #2a2a2a">فترة صباحية</div>
<div class="t rtl" style="left:1145.5px;top:449.3px;width:176.5px;text-align:center;font-size:13.4px;color:#2a2a2a;-webkit-text-stroke:.3px #2a2a2a">سوسن فاضل حسن الصمدي</div>
<div class="t" style="left:1080px;top:450.1px;width:65.5px;text-align:center;font-size:13.3px;font-weight:bold;color:#303030;padding-left:2px;">8:00:00</div>
<div class="t" style="left:959.5px;top:450.1px;width:120.5px;text-align:center;font-size:13.3px;font-weight:bold;color:#303030;padding-left:2px;">7:30:00</div>
<div class="t" style="left:837.5px;top:450.1px;width:122.0px;text-align:center;font-size:13.3px;font-weight:bold;color:#303030;padding-left:2px;">8:15:00</div>
<div class="t" style="left:757.5px;top:450.1px;width:80.0px;text-align:center;font-size:13.3px;font-weight:bold;color:#303030;padding-left:2px;">13:00:00</div>
<div class="t" style="left:618.5px;top:450.1px;width:139.0px;text-align:center;font-size:13.3px;font-weight:bold;color:#303030;padding-left:2px;">13:00:00</div>
<div class="t" style="left:463.5px;top:450.1px;width:155.0px;text-align:center;font-size:13.3px;font-weight:bold;color:#303030;padding-left:2px;">14:00:00</div>
<div class="a" style="left:463.5px;top:467.6px;width:1080.8px;height:20.85px;background:#f5f5f5;border-bottom:1px solid #dcdcdc"></div>
<div class="t" style="left:1500.5px;top:470.9px;width:43.8px;text-align:center;font-size:13.3px;font-weight:bold;color:#303030;padding-left:2px;">6</div>
<div class="t rtl" style="left:1405.5px;top:471.2px;width:95.0px;text-align:center;font-size:12.06px;color:#2a2a2a;-webkit-text-stroke:.3px #2a2a2a">المركز الرئيسي</div>
<div class="t rtl" style="left:1322px;top:470.3px;width:83.5px;text-align:center;font-size:13.23px;color:#2a2a2a;-webkit-text-stroke:.3px #2a2a2a">فترة مسائية</div>
<div class="t rtl" style="left:1145.5px;top:470.1px;width:176.5px;text-align:center;font-size:13.4px;color:#2a2a2a;-webkit-text-stroke:.3px #2a2a2a">سوسن فاضل حسن الصمدي</div>
<div class="t" style="left:1080px;top:470.9px;width:65.5px;text-align:center;font-size:13.3px;font-weight:bold;color:#303030;padding-left:2px;">16:00:00</div>
<div class="t" style="left:959.5px;top:470.9px;width:120.5px;text-align:center;font-size:13.3px;font-weight:bold;color:#303030;padding-left:2px;">15:30:00</div>
<div class="t" style="left:837.5px;top:470.9px;width:122.0px;text-align:center;font-size:13.3px;font-weight:bold;color:#303030;padding-left:2px;">16:15:00</div>
<div class="t" style="left:757.5px;top:470.9px;width:80.0px;text-align:center;font-size:13.3px;font-weight:bold;color:#303030;padding-left:2px;">20:00:00</div>
<div class="t" style="left:618.5px;top:470.9px;width:139.0px;text-align:center;font-size:13.3px;font-weight:bold;color:#303030;padding-left:2px;">20:00:00</div>
<div class="t" style="left:463.5px;top:470.9px;width:155.0px;text-align:center;font-size:13.3px;font-weight:bold;color:#303030;padding-left:2px;">20:30:00</div>
<div class="a" style="left:463.5px;top:488.4px;width:1080.8px;height:20.85px;background:#fff;border-bottom:1px solid #dcdcdc"></div>
<div class="t" style="left:1500.5px;top:491.8px;width:43.8px;text-align:center;font-size:13.3px;font-weight:bold;color:#303030;padding-left:2px;">7</div>
<div class="t rtl" style="left:1405.5px;top:492.1px;width:95.0px;text-align:center;font-size:12.06px;color:#2a2a2a;-webkit-text-stroke:.3px #2a2a2a">المركز الرئيسي</div>
<div class="t rtl" style="left:1322px;top:491.0px;width:83.5px;text-align:center;font-size:13.36px;color:#2a2a2a;-webkit-text-stroke:.3px #2a2a2a">فترة صباحية</div>
<div class="t rtl" style="left:1145.5px;top:490.8px;width:176.5px;text-align:center;font-size:13.58px;color:#2a2a2a;-webkit-text-stroke:.3px #2a2a2a">هشام&nbsp; يحيي قائد منصور</div>
<div class="t" style="left:1080px;top:491.8px;width:65.5px;text-align:center;font-size:13.3px;font-weight:bold;color:#303030;padding-left:2px;">7:00:00</div>
<div class="t" style="left:959.5px;top:491.8px;width:120.5px;text-align:center;font-size:13.3px;font-weight:bold;color:#303030;padding-left:2px;">7:00:00</div>
<div class="t" style="left:837.5px;top:491.8px;width:122.0px;text-align:center;font-size:13.3px;font-weight:bold;color:#303030;padding-left:2px;">7:30:00</div>
<div class="t" style="left:757.5px;top:491.8px;width:80.0px;text-align:center;font-size:13.3px;font-weight:bold;color:#303030;padding-left:2px;">22:30:00</div>
<div class="t" style="left:618.5px;top:491.8px;width:139.0px;text-align:center;font-size:13.3px;font-weight:bold;color:#303030;padding-left:2px;">22:00:00</div>
<div class="t" style="left:463.5px;top:491.8px;width:155.0px;text-align:center;font-size:13.3px;font-weight:bold;color:#303030;padding-left:2px;">22:30:00</div>
<div class="a" style="left:463.5px;top:509.2px;width:1080.8px;height:20.85px;background:#f5f5f5;border-bottom:1px solid #dcdcdc"></div>
<div class="t" style="left:1500.5px;top:512.6px;width:43.8px;text-align:center;font-size:13.3px;font-weight:bold;color:#303030;padding-left:2px;">8</div>
<div class="t rtl" style="left:1405.5px;top:512.9px;width:95.0px;text-align:center;font-size:12.06px;color:#2a2a2a;-webkit-text-stroke:.3px #2a2a2a">المركز الرئيسي</div>
<div class="t rtl" style="left:1322px;top:512.0px;width:83.5px;text-align:center;font-size:13.23px;color:#2a2a2a;-webkit-text-stroke:.3px #2a2a2a">فترة مسائية</div>
<div class="t rtl" style="left:1145.5px;top:512.1px;width:176.5px;text-align:center;font-size:13.07px;color:#2a2a2a;-webkit-text-stroke:.3px #2a2a2a">رشاد ناصر محمد القشة</div>
<div class="t" style="left:1080px;top:512.6px;width:65.5px;text-align:center;font-size:13.3px;font-weight:bold;color:#303030;padding-left:2px;">16:00:00</div>
<div class="t" style="left:959.5px;top:512.6px;width:120.5px;text-align:center;font-size:13.3px;font-weight:bold;color:#303030;padding-left:2px;">15:30:00</div>
<div class="t" style="left:837.5px;top:512.6px;width:122.0px;text-align:center;font-size:13.3px;font-weight:bold;color:#303030;padding-left:2px;">16:15:00</div>
<div class="t" style="left:757.5px;top:512.6px;width:80.0px;text-align:center;font-size:13.3px;font-weight:bold;color:#303030;padding-left:2px;">23:00:00</div>
<div class="t" style="left:618.5px;top:512.6px;width:139.0px;text-align:center;font-size:13.3px;font-weight:bold;color:#303030;padding-left:2px;">22:30:00</div>
<div class="t" style="left:463.5px;top:512.6px;width:155.0px;text-align:center;font-size:13.3px;font-weight:bold;color:#303030;padding-left:2px;">23:30:00</div>
<div class="a" style="left:463.5px;top:530.1px;width:1080.8px;height:20.85px;background:#fff;border-bottom:1px solid #dcdcdc"></div>
<div class="t" style="left:1500.5px;top:533.5px;width:43.8px;text-align:center;font-size:13.3px;font-weight:bold;color:#303030;padding-left:2px;">9</div>
<div class="t rtl" style="left:1405.5px;top:533.8px;width:95.0px;text-align:center;font-size:12.06px;color:#2a2a2a;-webkit-text-stroke:.3px #2a2a2a">المركز الرئيسي</div>
<div class="t rtl" style="left:1322px;top:532.8px;width:83.5px;text-align:center;font-size:13.23px;color:#2a2a2a;-webkit-text-stroke:.3px #2a2a2a">فترة مسائية</div>
<div class="t rtl" style="left:1145.5px;top:532.7px;width:176.5px;text-align:center;font-size:13.37px;color:#2a2a2a;-webkit-text-stroke:.3px #2a2a2a">محمد اسماعيل&nbsp; عبده علي</div>
<div class="t" style="left:1080px;top:533.5px;width:65.5px;text-align:center;font-size:13.3px;font-weight:bold;color:#303030;padding-left:2px;">23:00:00</div>
<div class="t" style="left:959.5px;top:533.5px;width:120.5px;text-align:center;font-size:13.3px;font-weight:bold;color:#303030;padding-left:2px;">22:30:00</div>
<div class="t" style="left:837.5px;top:533.5px;width:122.0px;text-align:center;font-size:13.3px;font-weight:bold;color:#303030;padding-left:2px;">23:15:00</div>
<div class="t" style="left:757.5px;top:533.5px;width:80.0px;text-align:center;font-size:13.3px;font-weight:bold;color:#303030;padding-left:2px;">7:00:00</div>
<div class="t" style="left:618.5px;top:533.5px;width:139.0px;text-align:center;font-size:13.3px;font-weight:bold;color:#303030;padding-left:2px;">7:15:00</div>
<div class="t" style="left:463.5px;top:533.5px;width:155.0px;text-align:center;font-size:13.3px;font-weight:bold;color:#303030;padding-left:2px;">7:30:00</div>
<div class="a" style="left:1500.0px;top:363.500px;width:1px;height:187.7px;background:#d9d9d9"></div>
<div class="a" style="left:1405.0px;top:363.500px;width:1px;height:187.7px;background:#d9d9d9"></div>
<div class="a" style="left:1321.5px;top:363.500px;width:1px;height:187.7px;background:#d9d9d9"></div>
<div class="a" style="left:1145.0px;top:363.500px;width:1px;height:187.7px;background:#d9d9d9"></div>
<div class="a" style="left:1079.5px;top:363.500px;width:1px;height:187.7px;background:#d9d9d9"></div>
<div class="a" style="left:959.0px;top:363.500px;width:1px;height:187.7px;background:#d9d9d9"></div>
<div class="a" style="left:837.0px;top:363.500px;width:1px;height:187.7px;background:#d9d9d9"></div>
<div class="a" style="left:757.0px;top:363.500px;width:1px;height:187.7px;background:#d9d9d9"></div>
<div class="a" style="left:618.0px;top:363.500px;width:1px;height:187.7px;background:#d9d9d9"></div>
<div class="a" style="left:463.0px;top:363.500px;width:1px;height:187.7px;background:#d9d9d9"></div>
<div class="a" style="left:24.200px;top:295.2px;width:416.800px;height:236.00000000000006px;background:#fff;border:1.900px solid #bfd0e3;border-radius:6px 6px 4.500px 4.500px;box-shadow:0 0 0 .6px rgba(200,225,245,.7),inset 0 0 0 .8px rgba(214,234,250,.9)"></div>
<div class="a hdr" style="left:24.200px;top:295.2px;width:416.800px;height:23.500px;border-radius:6px 6px 0 0;border:1px solid #3b8ae6;border-bottom:none"></div>
<div class="t rtl" style="left:24.5px;top:298.9px;width:416.5px;text-align:center;font-size:15.28px;font-weight:bold;color:#fff;">أضافة جزاء</div>
<div class="a" style="left:26px;top:318.7px;width:413.500px;height:38px;background:#fafafa;border-bottom:1px solid #efefef"></div>
<div class="t" style="left:100px;top:332.5px;width:319px;text-align:right;font-size:11.54px;font-weight:bold;color:#cfcfcf;">Drag a column header here to group by that column</div>
<svg style="left:36px;top:329.2px" width="15" height="14.5" viewBox="0 0 15 14.500" ><circle cx="8.800" cy="6" r="4.900" fill="none" stroke="#dedede" stroke-width="1.400"/><path d="M5.400 9.600L.900 13.800" stroke="#dedede" stroke-width="1.600"/></svg>
<div class="a" style="left:26px;top:357.9px;width:413.500px;height:27.300px;background:#fbfbfb;border-bottom:1px solid #efefef"></div>
<div class="a" style="left:41.400px;top:358.2px;width:380.600px;height:26.800px;background:linear-gradient(#c7e9fa,#badaf8 50%,#b4d0f6);border-bottom:1.400px solid #9ea6b4"></div>
<div class="t rtl" style="left:331.4px;top:364.3px;width:90.6px;text-align:center;font-size:14.35px;font-weight:bold;color:#fff;">من الوقت</div>
<div class="a" style="left:330.79999999999995px;top:358.2px;width:1.200px;height:26px;background:#9fa9b8"></div>
<div class="t rtl" style="left:241.5px;top:364.2px;width:89.9px;text-align:center;font-size:14.47px;font-weight:bold;color:#fff;">إلى الوقت</div>
<div class="a" style="left:240.9px;top:358.2px;width:1.200px;height:26px;background:#9fa9b8"></div>
<div class="t rtl" style="left:187.7px;top:364.0px;width:53.8px;text-align:center;font-size:14.63px;font-weight:bold;color:#fff;">جزاء/د</div>
<div class="a" style="left:187.1px;top:358.2px;width:1.200px;height:26px;background:#9fa9b8"></div>
<div class="t rtl" style="left:133.4px;top:364.0px;width:54.3px;text-align:center;font-size:14.7px;font-weight:bold;color:#fff;">حضور</div>
<div class="a" style="left:132.8px;top:358.2px;width:1.200px;height:26px;background:#9fa9b8"></div>
<div class="t rtl" style="left:80.6px;top:363.9px;width:52.8px;text-align:center;font-size:14.71px;font-weight:bold;color:#fff;">أنصرا...</div>
<div class="a" style="left:80.0px;top:358.2px;width:1.200px;height:26px;background:#9fa9b8"></div>
<div class="t rtl" style="left:41.4px;top:363.2px;width:39.2px;text-align:center;font-size:15.6px;font-weight:bold;color:#fff;">حذ...</div>
<svg style="left:28.5px;top:391.2px" width="11" height="5.5" viewBox="0 0 12 6" ><path d="M0 6L6 0l6 6z" fill="#f1f1f1"/></svg>
<svg style="left:28.5px;top:518.7px" width="11" height="5.5" viewBox="0 0 12 6" ><path d="M0 0h12L6 6z" fill="#f1f1f1"/></svg>
<div class="a" style="left:41.400px;top:385.8px;width:380.600px;height:31.500px;background:#f9fcfe;border:1px solid #eef2f6"></div>
<div class="a" style="left:133.400px;top:385.8px;width:54.300px;height:31.500px;background:#f1f7fc"></div>
<div class="a" style="left:330.7px;top:385.8px;width:1.500px;height:31.500px;background:#eef1f4"></div>
<div class="a" style="left:240.8px;top:385.8px;width:1.500px;height:31.500px;background:#eef1f4"></div>
<div class="a" style="left:187.0px;top:385.8px;width:1.500px;height:31.500px;background:#eef1f4"></div>
<div class="a" style="left:132.70000000000002px;top:385.8px;width:1.500px;height:31.500px;background:#eef1f4"></div>
<div class="a" style="left:79.89999999999999px;top:385.8px;width:1.500px;height:31.500px;background:#eef1f4"></div>
<div class="t" style="left:333px;top:394.5px;width:70px;text-align:center;font-size:12.4px;font-weight:bold;color:#dcdcdc;">10:00:00</div>
<svg style="left:407px;top:395.3px" width="12.4" height="12.4" viewBox="0 0 12.400 12.400" ><circle cx="6.200" cy="6.200" r="5.500" fill="none" stroke="#e3e3e3" stroke-width="1.100"/><path d="M6.200 3v3.600l2.600-1.500" fill="none" stroke="#e3e3e3" stroke-width="1.100"/></svg>
<div class="t" style="left:244.5px;top:394.5px;width:66px;text-align:center;font-size:12.4px;font-weight:bold;color:#dcdcdc;">22:00:00</div>
<svg style="left:316px;top:395.3px" width="12.4" height="12.4" viewBox="0 0 12.400 12.400" ><circle cx="6.200" cy="6.200" r="5.500" fill="none" stroke="#e3e3e3" stroke-width="1.100"/><path d="M6.200 3v3.600l2.600-1.500" fill="none" stroke="#e3e3e3" stroke-width="1.100"/></svg>
<div class="t" style="left:200px;top:394.5px;width:36px;text-align:right;font-size:12.4px;font-weight:bold;color:#dcdcdc;">3</div>
<div class="a" style="left:155.10000000000002px;top:393.8px;width:14.500px;height:14.500px;background:#fff;border:1px solid #e9e9e9"></div>
<svg style="left:157.70000000000002px;top:397.3px" width="9.5" height="8" viewBox="0 0 9.500 8" ><path d="M.700 3.800l2.800 3L8.800.700" fill="none" stroke="#dfe4e8" stroke-width="1.300"/></svg>
<div class="a" style="left:101.1px;top:393.8px;width:14.500px;height:14.500px;background:#fff;border:1px solid #e9e9e9"></div>
<svg style="left:103.7px;top:397.3px" width="9.5" height="8" viewBox="0 0 9.500 8" ><path d="M.700 3.800l2.800 3L8.800.700" fill="none" stroke="#dfe4e8" stroke-width="1.300"/></svg>
<svg style="left:52px;top:393.3px" width="18" height="17" viewBox="0 0 18 17" ><path d="M1.500 1.500L16.500 15.500M16.500 1.500L1.500 15.500" stroke="#f6d0ce" stroke-width="3.100" stroke-linecap="round"/></svg>
<svg style="left:427.5px;top:397.3px" width="4.2" height="8" viewBox="0 0 4.200 8" ><path d="M4.200 0v8L0 4z" fill="#adadad"/></svg>
<div class="a" style="left:24.200px;top:535.2px;width:416.800px;height:215.0px;background:#fff;border:1.900px solid #bfd0e3;border-radius:6px 6px 4.500px 4.500px;box-shadow:0 0 0 .6px rgba(200,225,245,.7),inset 0 0 0 .8px rgba(214,234,250,.9)"></div>
<div class="a hdr" style="left:24.200px;top:535.2px;width:416.800px;height:23.500px;border-radius:6px 6px 0 0;border:1px solid #3b8ae6;border-bottom:none"></div>
<div class="t rtl" style="left:24.5px;top:538.9px;width:416.5px;text-align:center;font-size:15.27px;font-weight:bold;color:#fff;">أضافة أستراحة</div>
<div class="a" style="left:26px;top:558.7px;width:413.500px;height:38px;background:#fafafa;border-bottom:1px solid #efefef"></div>
<div class="t" style="left:100px;top:572.5px;width:319px;text-align:right;font-size:11.54px;font-weight:bold;color:#cfcfcf;">Drag a column header here to group by that column</div>
<svg style="left:36px;top:569.2px" width="15" height="14.5" viewBox="0 0 15 14.500" ><circle cx="8.800" cy="6" r="4.900" fill="none" stroke="#dedede" stroke-width="1.400"/><path d="M5.400 9.600L.900 13.800" stroke="#dedede" stroke-width="1.600"/></svg>
<div class="a" style="left:26px;top:597.9000000000001px;width:413.500px;height:27.300px;background:#fbfbfb;border-bottom:1px solid #efefef"></div>
<div class="a" style="left:41.400px;top:598.2px;width:380.600px;height:26.800px;background:linear-gradient(#c7e9fa,#badaf8 50%,#b4d0f6);border-bottom:1.400px solid #9ea6b4"></div>
<div class="t rtl" style="left:264.7px;top:604.3px;width:157.3px;text-align:center;font-size:14.35px;font-weight:bold;color:#fff;">من الوقت</div>
<div class="a" style="left:264.09999999999997px;top:598.2px;width:1.200px;height:26px;background:#9fa9b8"></div>
<div class="t rtl" style="left:107.2px;top:604.2px;width:157.5px;text-align:center;font-size:14.47px;font-weight:bold;color:#fff;">إلى الوقت</div>
<div class="a" style="left:106.60000000000001px;top:598.2px;width:1.200px;height:26px;background:#9fa9b8"></div>
<div class="t rtl" style="left:41.4px;top:604.1px;width:65.8px;text-align:center;font-size:14.57px;font-weight:bold;color:#fff;">حذف</div>
<svg style="left:28.5px;top:631.2px" width="11" height="5.5" viewBox="0 0 12 6" ><path d="M0 6L6 0l6 6z" fill="#f1f1f1"/></svg>
<svg style="left:28.5px;top:737.7px" width="11" height="5.5" viewBox="0 0 12 6" ><path d="M0 0h12L6 6z" fill="#f1f1f1"/></svg>
<div class="a" style="left:1580px;top:435.300px;width:1.200px;height:30.700px;background:#a8a8a8"></div><div class="a" style="left:1582.800px;top:435.300px;width:1.200px;height:30.700px;background:#a8a8a8"></div><div class="a" style="left:1585.700px;top:435.300px;width:1.200px;height:30.700px;background:#a8a8a8"></div>
<div class="a" id="status"></div><div class="a" id="blackline"></div><div class="a" style="left:0;top:822px;width:2px;height:23px;background:#0a0a0a"></div><div class="a" id="adbar"></div>
<div class="a" style="left:1599px;top:822px;width:1px;height:23px;background:#111"></div>
<div class="a" style="left:1526px;top:822px;width:73px;height:23px;background:#ef8f3d"></div>
<div class="t rtl" style="left:1526px;top:826.9px;width:73px;text-align:center;font-size:15.2px;font-weight:bold;color:#050505;">إعلان</div>
<div class="a" style="left:1561.300px;top:788.600px;width:38.700px;height:31.200px;background:#435f9f"></div>
<div class="a" style="left:1562.500px;top:790.100px;width:36.200px;height:28.400px;background:#000;border:1px solid #5d6470;border-radius:4.500px"></div>
<div class="t" style="left:1563px;top:797px;width:36.2px;text-align:center;font-size:16px;color:#e9e900;">0</div>
<div class="t rtl" style="left:1440px;top:796.9px;width:113.2px;text-align:right;font-size:12.64px;color:#fff;">نسخة مرخصة</div>
<div class="t" style="left:1365.3px;top:797.2px;width:100px;text-align:left;font-size:14.92px;color:#fff;">Version 1.1.3</div>
<svg style="left:1338.4px;top:797.5px" width="17" height="12.6" viewBox="0 0 17 12.600" ><path d="M8.500 0l8.500 7-1 1.200-7.500-6.200L1 8.200 0 7z" fill="#fff"/><path d="M2.600 7.600l5.900-4.800 5.900 4.800v5H10.400V9H6.600v3.600H2.600z" fill="#fff"/><rect x="12.400" y=".800" width="1.800" height="3.400" fill="#fff"/></svg>
<div class="t rtl" style="left:1100px;top:798.8px;width:234.3px;text-align:right;font-size:12.37px;color:#fff;">مركز العريفي الطبي&nbsp; مركز العريفي الطبي</div>
<svg style="left:1071.5px;top:796.5px" width="17.5" height="15" viewBox="0 0 17.500 15" ><circle cx="8.700" cy="3.900" r="3.900" fill="#fff"/><path d="M0 15v-1.600c0-2.800 2.300-4.400 5-4.400h7.500c2.700 0 5 1.600 5 4.400V15z" fill="#fff"/></svg>
<div class="t" style="left:993.5px;top:799.2px;width:90px;text-align:left;font-size:12.69px;color:#fff;">Administrator</div>
<svg style="left:969px;top:796.5px" width="18" height="15.5" viewBox="0 0 18 15.500" ><path d="M1.200 0v15.500" stroke="#fff" stroke-width="1.700"/><path d="M1.600 1.600c3-1.500 5.200-.200 7.600.400 2.200.500 4.400.300 7.600-.600v8.200c-3 1.100-5.300 1.200-7.600.600-2.400-.600-4.500-1.700-7.600-.400z" fill="none" stroke="#fff" stroke-width="1.500" stroke-linejoin="round"/></svg>
<div class="t" style="left:933px;top:799.0px;width:40px;text-align:left;font-size:12.94px;color:#fff;">2025</div>
<svg style="left:900px;top:796px" width="14" height="18" viewBox="0 0 14 18" ><rect x="0" y="0" width="14" height="18" rx="1.400" fill="#fff"/><rect x="2" y="2" width="10" height="3.200" fill="#435878"/><rect x="2.0" y="7.0" width="2.400" height="1.800" fill="#435878"/><rect x="5.8" y="7.0" width="2.400" height="1.800" fill="#435878"/><rect x="9.6" y="7.0" width="2.400" height="1.800" fill="#435878"/><rect x="2.0" y="9.7" width="2.400" height="1.800" fill="#435878"/><rect x="5.8" y="9.7" width="2.400" height="1.800" fill="#435878"/><rect x="9.6" y="9.7" width="2.400" height="1.800" fill="#435878"/><rect x="2.0" y="12.4" width="2.400" height="1.800" fill="#435878"/><rect x="5.8" y="12.4" width="2.400" height="1.800" fill="#435878"/><rect x="9.6" y="12.4" width="2.400" height="1.800" fill="#435878"/><rect x="2.0" y="15.1" width="2.400" height="1.800" fill="#435878"/><rect x="5.8" y="15.1" width="2.400" height="1.800" fill="#435878"/><rect x="9.6" y="15.1" width="2.400" height="1.800" fill="#435878"/></svg>
<div class="a" style="left:3.5px;top:792.400px;width:24.700px;height:25.100px;background:#fff;border:1px solid #111;border-radius:5.500px"></div>
<svg style="left:6.2px;top:795.3px" width="19.5" height="19.5" viewBox="0 0 19.500 19.500" ><path d="M4.500 6.500c0-3.300 2-5.300 4.600-5.300s4.600 2 4.600 5.300c0 2.200.600 4 1.300 5.200H3.200c.700-1.200 1.300-3 1.300-5.200z" fill="#9a5a32"/><ellipse cx="9.100" cy="7.300" rx="2.900" ry="3.400" fill="#f3c08a"/><path d="M2.500 18.500c.300-3.800 2.600-5.500 6.600-5.500s6.300 1.700 6.600 5.500z" fill="#5da3e8"/><path d="M11.500 17.500l1-3.300 5-5 2.300 2.300-5 5z" fill="#f5c542" stroke="#b5651d" stroke-width=".500"/><path d="M16.800 9.900l1.100-1.100 2.300 2.300-1.100 1.100z" fill="#e25a6e"/></svg>
<div class="a" style="left:70.5px;top:792.400px;width:24.700px;height:25.100px;background:#fff;border:1px solid #111;border-radius:5.500px"></div>
<svg style="left:73.2px;top:795.3px" width="19.5" height="19.5" viewBox="0 0 19.500 19.500" ><path d="M2 18l4.200-4.200" stroke="#555" stroke-width="1.100"/><path d="M5.200 12.300l7.300-7.300 2.600 2.600-7.300 7.300z" fill="#9fd7ef" stroke="#4c88a8" stroke-width=".800"/><path d="M12.800 4.700l1.700-1.700M14.900 6.800l1.700-1.700M13.900 2.300l3.400 3.400" stroke="#4c88a8" stroke-width="1.200"/><circle cx="17.300" cy="2.300" r=".700" fill="#6cb6e0"/><circle cx="18.400" cy="4.300" r=".500" fill="#6cb6e0"/></svg>
<div class="a" style="left:127.3px;top:792.400px;width:24.700px;height:25.100px;background:#fff;border:1px solid #111;border-radius:5.500px"></div>
<svg style="left:130.0px;top:795.3px" width="19.5" height="19.5" viewBox="0 0 19.500 19.500" ><g transform="translate(1.700 2.900) scale(.830)"><path d="M7.600 1.500h4.300M8.300 1.700v5.600L3.600 16c-.500 1 .100 2 1.200 2h9.900c1.100 0 1.700-1 1.200-2l-4.700-8.700V1.700" fill="#dff1fb" stroke="#5ba7d9" stroke-width="1.100"/><path d="M5.900 11.800h7.700l2.300 4.200c.500 1-.100 2-1.200 2H4.800c-1.100 0-1.700-1-1.200-2z" fill="#ea1e5b"/><circle cx="8.300" cy="14.300" r=".900" fill="#fff"/><circle cx="11.200" cy="15.600" r=".700" fill="#fff"/></g></svg>
<div class="a" style="left:158.6px;top:792.400px;width:24.700px;height:25.100px;background:#fff;border:1px solid #111;border-radius:5.500px"></div>
<svg style="left:161.3px;top:795.3px" width="19.5" height="19.5" viewBox="0 0 19.500 19.500" ><path d="M2.200 17.300l1.500-4L14.800 2.200c.700-.700 1.700-.700 2.300 0 .700.700.700 1.700 0 2.300L6.100 15.700z" fill="#4a4a4a"/><path d="M2.200 17.300l1.500-4 2.400 2.400z" fill="#c9a24a"/><path d="M6.500 13.800L16 4.300" stroke="#9a9a9a" stroke-width=".800"/></svg>
<div class="a" style="left:193.700px;top:793px;width:40.300px;height:21.700px;background:#fff"></div>
<div class="a" style="left:235.700px;top:793px;width:56.300px;height:21.700px;background:#fff"></div>
<div class="a" style="left:234px;top:793px;width:1.700px;height:21.700px;background:#9a9a9a"></div>
<svg style="left:222px;top:803px" width="7.6" height="4.2" viewBox="0 0 8 4.400" ><path d="M0 0h8L4 4.400z" fill="#222"/></svg>
<svg style="left:263px;top:803px" width="7.6" height="4.2" viewBox="0 0 8 4.400" ><path d="M0 0h8L4 4.400z" fill="#222"/></svg>
<svg style="left:278.4px;top:799.5px" width="10" height="8.5" viewBox="0 0 10 8.500" ><path d="M.600 4.600l2.800 2.900L9.400.600" fill="none" stroke="#222" stroke-width="1.400"/></svg>
</body></html>
